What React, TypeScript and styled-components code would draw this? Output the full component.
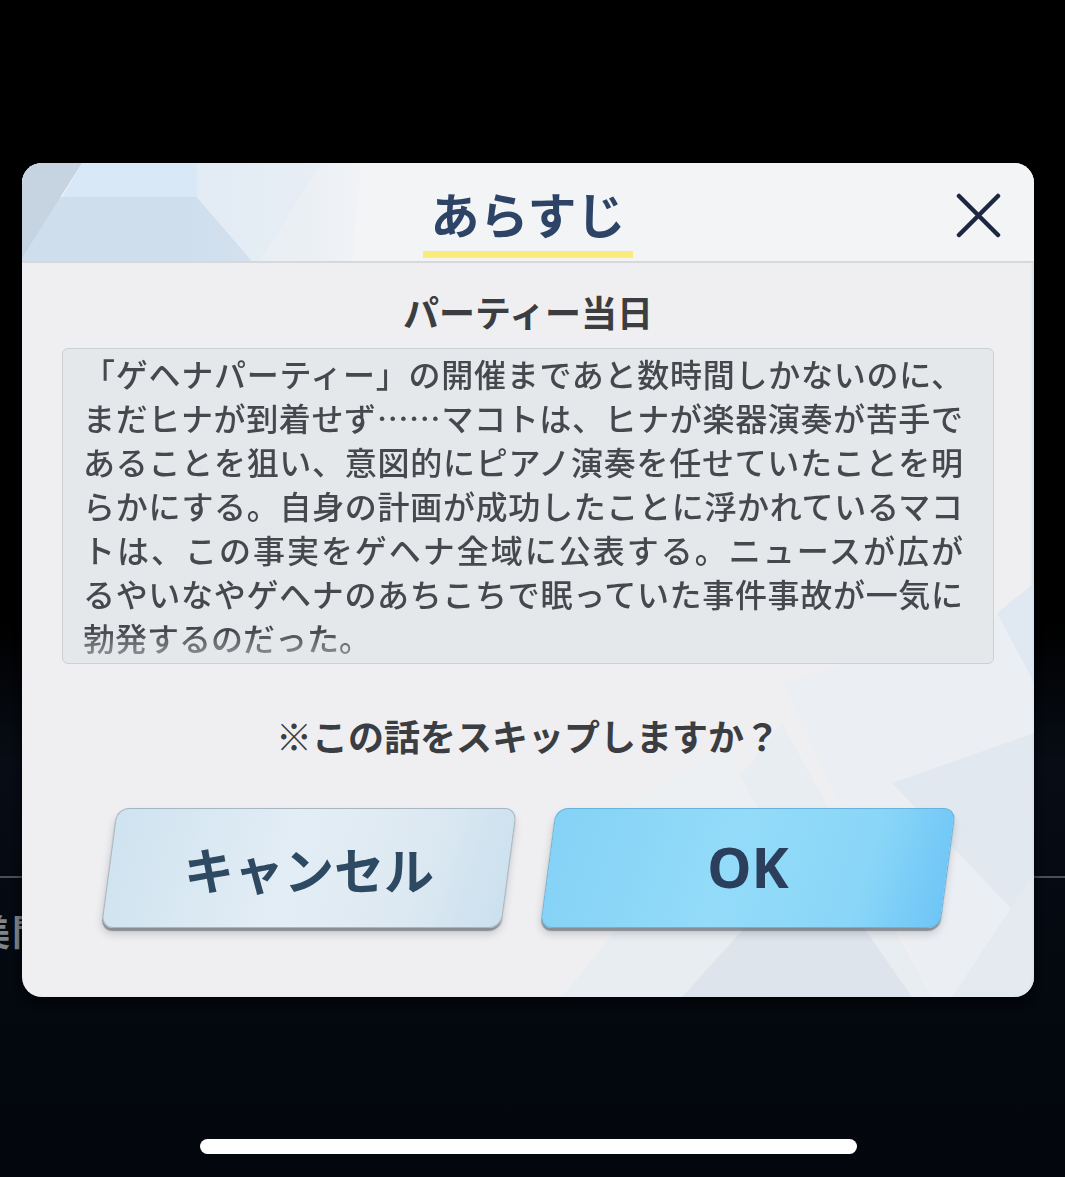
import styled, { createGlobalStyle } from "styled-components";

const GlobalStyle = createGlobalStyle`
  html, body {
    margin: 0;
    padding: 0;
    background: #000;
  }
  * {
    box-sizing: border-box;
  }
`;

const JP = `"Noto Sans CJK JP", "Noto Sans", sans-serif`;

const Page = styled.div`
  position: relative;
  width: 1065px;
  height: 1177px;
  overflow: hidden;
  display: flex;
  flex-direction: column;
  background: linear-gradient(
    to bottom,
    #000 0px,
    #000 620px,
    #070c15 760px,
    #04080f 1000px,
    #03070d 1177px
  );
  font-family: ${JP};
`;

const BgDivider = styled.div`
  margin-top: 876px;
  height: 2px;
  background: #4a4f56;
`;

const BgRow = styled.div`
  margin-left: -26px;
  padding-top: 26px;
  font-size: 36px;
  font-weight: 700;
  color: #7f838a;
  letter-spacing: 2px;
`;

const HomeBar = styled.div`
  margin-top: auto;
  margin-bottom: 23px;
  margin-left: 200px;
  width: 657px;
  height: 15px;
  border-radius: 8px;
  background: #fff;
`;

const Modal = styled.div`
  position: absolute;
  left: 22px;
  top: 163px;
  width: 1012px;
  height: 834px;
  border-radius: 20px;
  overflow: hidden;
  background: #efeff1;
  display: flex;
  flex-direction: column;
  box-shadow: 0 5px 8px rgba(0, 0, 0, 0.7), inset -2px 0 2px rgba(190, 215, 235, 0.6);
`;

const Decor = styled.svg`
  position: absolute;
  inset: 0;
  pointer-events: none;
`;

const Header = styled.div`
  position: relative;
  height: 100px;
  flex-shrink: 0;
  display: grid;
  grid-template-columns: 1fr auto 1fr;
  background: #f3f4f6;
  border-bottom: 2px solid #d6d8db;
`;

const Title = styled.h1`
  position: relative;
  grid-column: 2;
  align-self: end;
  margin: 0 0 3px;
  padding: 0 7px 11px;
  font-size: 49px;
  line-height: 54px;
  font-weight: 700;
  color: #2d4466;
  border-bottom: 7px solid #fbeb78;
`;

const CloseButton = styled.button`
  position: relative;
  grid-column: 3;
  justify-self: end;
  align-self: start;
  margin: 30px 33px 0 0;
  width: 45px;
  height: 45px;
  padding: 0;
  border: none;
  background: none;
  cursor: pointer;
`;

const Body = styled.div`
  position: relative;
  flex: 1;
  display: flex;
  flex-direction: column;
  align-items: center;
  padding: 28px 40px 0;
`;

const Subtitle = styled.h2`
  margin: 0;
  font-size: 36px;
  line-height: 40px;
  font-weight: 700;
  color: #3b3d40;
`;

const TextBox = styled.div`
  align-self: stretch;
  margin-top: 17px;
  height: 316px;
  padding: 2px 30px 0 20px;
  overflow: hidden;
  background: #e5e8eb;
  border: 1.5px solid #cdd1d5;
  border-radius: 6px;
`;

const StoryText = styled.div`
  font-size: 32px;
  line-height: 44px;
  font-weight: 500;
  color: #45494d;
  -webkit-mask-image: linear-gradient(to bottom, #000 0, #000 280px, rgba(0, 0, 0, 0.45) 310px);
  mask-image: linear-gradient(to bottom, #000 0, #000 280px, rgba(0, 0, 0, 0.45) 310px);
`;

const StoryLine = styled.div<{ $last?: boolean }>`
  text-align: justify;
  text-align-last: ${(p) => (p.$last ? "left" : "justify")};
`;

const Question = styled.p`
  margin: 49px 0 0;
  font-size: 36px;
  line-height: 44px;
  font-weight: 700;
  color: #3a3d41;
`;

const ButtonRow = styled.div`
  margin-top: 51px;
  display: flex;
  justify-content: center;
  gap: 39px;
`;

const SkewButton = styled.button<{ $primary?: boolean }>`
  width: 400px;
  height: 120px;
  padding: 0;
  display: flex;
  align-items: center;
  justify-content: center;
  transform: skewX(-7.6deg);
  border-radius: 12px;
  cursor: pointer;
  border: 1.5px solid ${(p) => (p.$primary ? "#66b4de" : "#a6b6c2")};
  background: ${(p) =>
    p.$primary
      ? "linear-gradient(100deg, #84d2f6 0%, #93dbf9 45%, #8ad6f8 78%, #6ec5f6 100%)"
      : "linear-gradient(100deg, #cfe3f0 0%, #e3edf5 45%, #dde9f2 75%, #cbe0ee 100%)"};
  box-shadow: 0 3px 1px rgba(70, 80, 90, 0.5), 0 6px 8px rgba(0, 0, 0, 0.16);
`;

const ButtonLabel = styled.span<{ $latin?: boolean }>`
  transform: skewX(7.6deg);
  font-family: ${(p) => (p.$latin ? `"Noto Sans", ${JP}` : JP)};
  font-size: ${(p) => (p.$latin ? "56px" : "50px")};
  font-weight: 700;
  line-height: 1;
  color: ${(p) => (p.$latin ? "#2b3f5c" : "#2e4a62")};
  margin-top: ${(p) => (p.$latin ? "-4px" : "0")};
`;

const story = [
  "「ゲヘナパーティー」の開催まであと数時間しかないのに、",
  "まだヒナが到着せず……マコトは、ヒナが楽器演奏が苦手で",
  "あることを狙い、意図的にピアノ演奏を任せていたことを明",
  "らかにする。自身の計画が成功したことに浮かれているマコ",
  "トは、この事実をゲヘナ全域に公表する。ニュースが広が",
  "るやいなやゲヘナのあちこちで眠っていた事件事故が一気に",
  "勃発するのだった。",
];

function ModalDecor() {
  return (
    <Decor width="1012" height="834" viewBox="0 0 1012 834">
      <g opacity="0.7">
        <polygon points="540,834 760,560 910,834" fill="#e6edf3" />
        <polygon points="660,834 790,690 890,834" fill="#d6e0ea" />
        <polygon points="760,520 1012,440 1012,834 910,834" fill="#eaf0f5" />
        <polygon points="870,620 1012,570 1012,770" fill="#dde6ef" />
        <polygon points="930,834 1012,710 1012,834" fill="#e1e9f1" />
        <polygon points="975,450 1012,420 1012,520" fill="#dbe7f2" />
        <polygon points="600,650 700,580 760,690" fill="#edf1f5" />
      </g>
    </Decor>
  );
}

function HeaderDecor() {
  return (
    <Decor width="1012" height="98" viewBox="0 0 1012 98">
      <defs>
        <linearGradient id="hfade" x1="0" y1="0" x2="1" y2="0">
          <stop offset="0" stopColor="#f3f4f6" stopOpacity="0" />
          <stop offset="0.6" stopColor="#f3f4f6" stopOpacity="0.2" />
          <stop offset="1" stopColor="#f3f4f6" stopOpacity="1" />
        </linearGradient>
      </defs>
      <polygon points="0,34 175,34 230,98 0,98" fill="#cfdeed" />
      <polygon points="60,0 175,0 175,34 40,34" fill="#d8e8f6" />
      <polygon points="0,0 60,0 0,95" fill="#c6d4e2" />
      <polygon points="175,0 300,0 238,98 230,98 175,34" fill="#e2ebf4" />
      <polygon points="238,98 300,0 340,0 330,98" fill="#e8eef4" />
      <rect x="160" y="0" width="200" height="98" fill="url(#hfade)" />
    </Decor>
  );
}

export default function App() {
  return (
    <>
      <GlobalStyle />
      <Page>
        <BgDivider />
        <BgRow>美間</BgRow>
        <HomeBar />

        <Modal>
          <ModalDecor />
          <Header>
            <HeaderDecor />
            <Title>あらすじ</Title>
            <CloseButton aria-label="閉じる">
              <svg width="45" height="45" viewBox="0 0 45 45">
                <path
                  d="M3 3 L42 42 M42 3 L3 42"
                  stroke="#1d2741"
                  strokeWidth="4.5"
                  strokeLinecap="round"
                />
              </svg>
            </CloseButton>
          </Header>
          <Body>
            <Subtitle>パーティー当日</Subtitle>
            <TextBox>
              <StoryText>
                {story.map((line, i) => (
                  <StoryLine key={i} $last={i === story.length - 1}>
                    {line}
                  </StoryLine>
                ))}
              </StoryText>
            </TextBox>
            <Question>※この話をスキップしますか？</Question>
            <ButtonRow>
              <SkewButton>
                <ButtonLabel>キャンセル</ButtonLabel>
              </SkewButton>
              <SkewButton $primary>
                <ButtonLabel $latin>OK</ButtonLabel>
              </SkewButton>
            </ButtonRow>
          </Body>
        </Modal>
      </Page>
    </>
  );
}
